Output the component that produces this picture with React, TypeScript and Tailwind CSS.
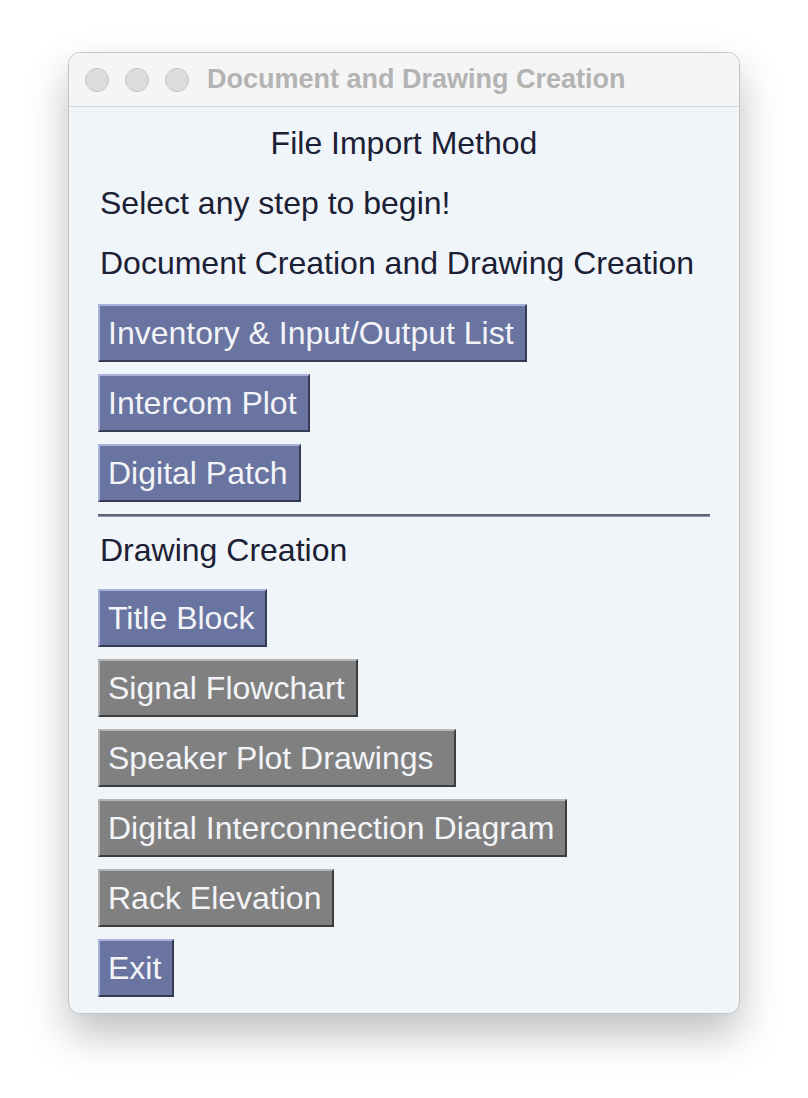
const blue =
  "bg-[#6a74a0] border-2 border-t-[#a9b1dc] border-l-[#a9b1dc] border-b-[#353a55] border-r-[#353a55]";
const gray =
  "bg-[#808080] border-2 border-t-[#b5b5b5] border-l-[#b5b5b5] border-b-[#3c3c3c] border-r-[#3c3c3c]";

function TkButton({
  label,
  enabled = true,
  wide = false,
}: {
  label: string;
  enabled?: boolean;
  wide?: boolean;
}) {
  return (
    <div className="flex">
      <button
        className={`${enabled ? blue : gray} ${
          wide ? "pr-[21px]" : "pr-[11px]"
        } h-[58px] pl-2 text-[32px] leading-none text-[#f2f4f8] whitespace-nowrap`}
      >
        {label}
      </button>
    </div>
  );
}

function Label({ children, center }: { children: string; center?: boolean }) {
  return (
    <div
      className={`h-[60px] flex items-center text-[32px] text-[#1c2035] ${
        center ? "justify-center" : "pl-[31px]"
      }`}
    >
      {children}
    </div>
  );
}

export default function App() {
  return (
    <div className="w-[808px] h-[1098px] bg-white pt-[52px] pl-[68px] font-['Liberation_Sans',Arial,sans-serif]">
      <div className="w-[672px] h-[962px] rounded-[12px] border border-[#c4c4c4] shadow-[0_20px_40px_rgba(0,0,0,0.25)] overflow-hidden bg-[#f0f5f9] flex flex-col">
        {/* title bar */}
        <div className="h-[54px] bg-[#f5f5f5] border-b border-[#d6d6d6] flex items-center pl-[16px] shrink-0">
          <div className="flex gap-4">
            <span className="w-6 h-6 rounded-full bg-[#dcdcdc] border border-[#c6c6c6]" />
            <span className="w-6 h-6 rounded-full bg-[#dcdcdc] border border-[#c6c6c6]" />
            <span className="w-6 h-6 rounded-full bg-[#dcdcdc] border border-[#c6c6c6]" />
          </div>
          <span className="ml-[18px] text-[27px] font-bold text-[#b3b3b3]">
            Document and Drawing Creation
          </span>
        </div>

        {/* body */}
        <div className="pt-[6px] flex flex-col">
          <Label center>File Import Method</Label>
          <Label>Select any step to begin!</Label>
          <Label>Document Creation and Drawing Creation</Label>

          <div className="mt-[11px] pl-[29px] flex flex-col gap-3">
            <TkButton label="Inventory & Input/Output List" />
            <TkButton label="Intercom Plot" />
            <TkButton label="Digital Patch" />
          </div>

          <div className="ml-[29px] mr-[29px] mt-[12px] h-[3px] bg-[#5d6375] border-b border-[#8d93a3]" />

          <div className="h-[66px] flex items-center pl-[31px] text-[32px] text-[#1c2035]">
            Drawing Creation
          </div>

          <div className="mt-[6px] pl-[29px] flex flex-col gap-3">
            <TkButton label="Title Block" />
            <TkButton label="Signal Flowchart" enabled={false} />
            <TkButton label="Speaker Plot Drawings" enabled={false} wide />
            <TkButton label="Digital Interconnection Diagram" enabled={false} />
            <TkButton label="Rack Elevation" enabled={false} />
            <TkButton label="Exit" />
          </div>
        </div>
      </div>
    </div>
  );
}
